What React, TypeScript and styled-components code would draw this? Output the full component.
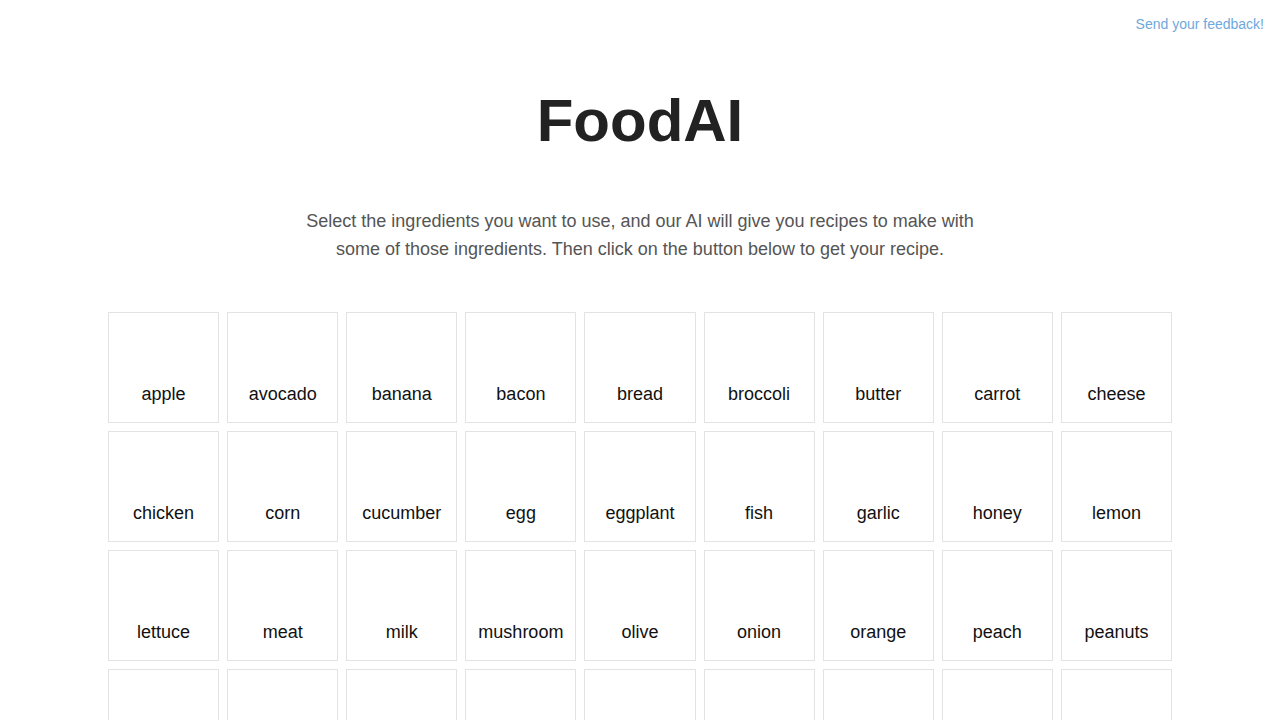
import React from 'react';
import styled, { createGlobalStyle } from 'styled-components';

const ingredients = [
    'apple', 'avocado', 'banana', 'bacon', 'bread', 'broccoli', 'butter', 'carrot', 'cheese',
    'chicken', 'corn', 'cucumber', 'egg', 'eggplant', 'fish', 'garlic', 'honey', 'lemon',
    'lettuce', 'meat', 'milk', 'mushroom', 'olive', 'onion', 'orange', 'peach', 'peanuts',
    'pepper', 'pineapple', 'potato', 'rice', 'salmon', 'shrimp', 'spinach', 'strawberry', 'tomato',
];

export default function App() {
    return (<>
        <GlobalStyle />
        <Page>
            <TopBar>
                <FeedbackLink href="#">Send your feedback!</FeedbackLink>
            </TopBar>
            <Title>FoodAI</Title>
            <Intro>
                Select the ingredients you want to use, and our AI will give you recipes to make with
                some of those ingredients. Then click on the button below to get your recipe.
            </Intro>
            <Grid>
                {ingredients.map(name => (
                    <Card key={name}>
                        <Picture />
                        <Label>{name}</Label>
                    </Card>
                ))}
            </Grid>
        </Page>
    </>);
}

const GlobalStyle = createGlobalStyle`
    body {
        margin: 0;
        background: #ffffff;
        font-family: "Liberation Sans", Arial, sans-serif;
    }
`;

const Page = styled.div`
    display: flex;
    flex-direction: column;
    align-items: center;
`;

const TopBar = styled.div`
    align-self: stretch;
    display: flex;
    justify-content: flex-end;
    padding: 15px 16px 0 0;
    height: 32px;
`;

const FeedbackLink = styled.a`
    color: #6fa8dc;
    font-size: 14px;
    line-height: 18px;
    text-decoration: none;
`;

const Title = styled.h1`
    margin: 34px 0 0;
    font-size: 60px;
    line-height: 80px;
    font-weight: 700;
    color: #222222;
`;

const Intro = styled.p`
    margin: 46px 0 0;
    width: 680px;
    text-align: center;
    font-size: 18px;
    line-height: 28px;
    color: #555555;
`;

const Grid = styled.div`
    margin-top: 49px;
    width: 1064px;
    display: grid;
    grid-template-columns: repeat(9, 1fr);
    gap: 8px;
`;

const Card = styled.div`
    box-sizing: border-box;
    height: 111px;
    border: 1px solid #e3e3e3;
    display: flex;
    flex-direction: column;
    align-items: center;
    cursor: pointer;
`;

const Picture = styled.div`
    flex: 1;
`;

const Label = styled.span`
    font-size: 18px;
    line-height: 22px;
    color: #111111;
    margin-bottom: 17px;
`;
